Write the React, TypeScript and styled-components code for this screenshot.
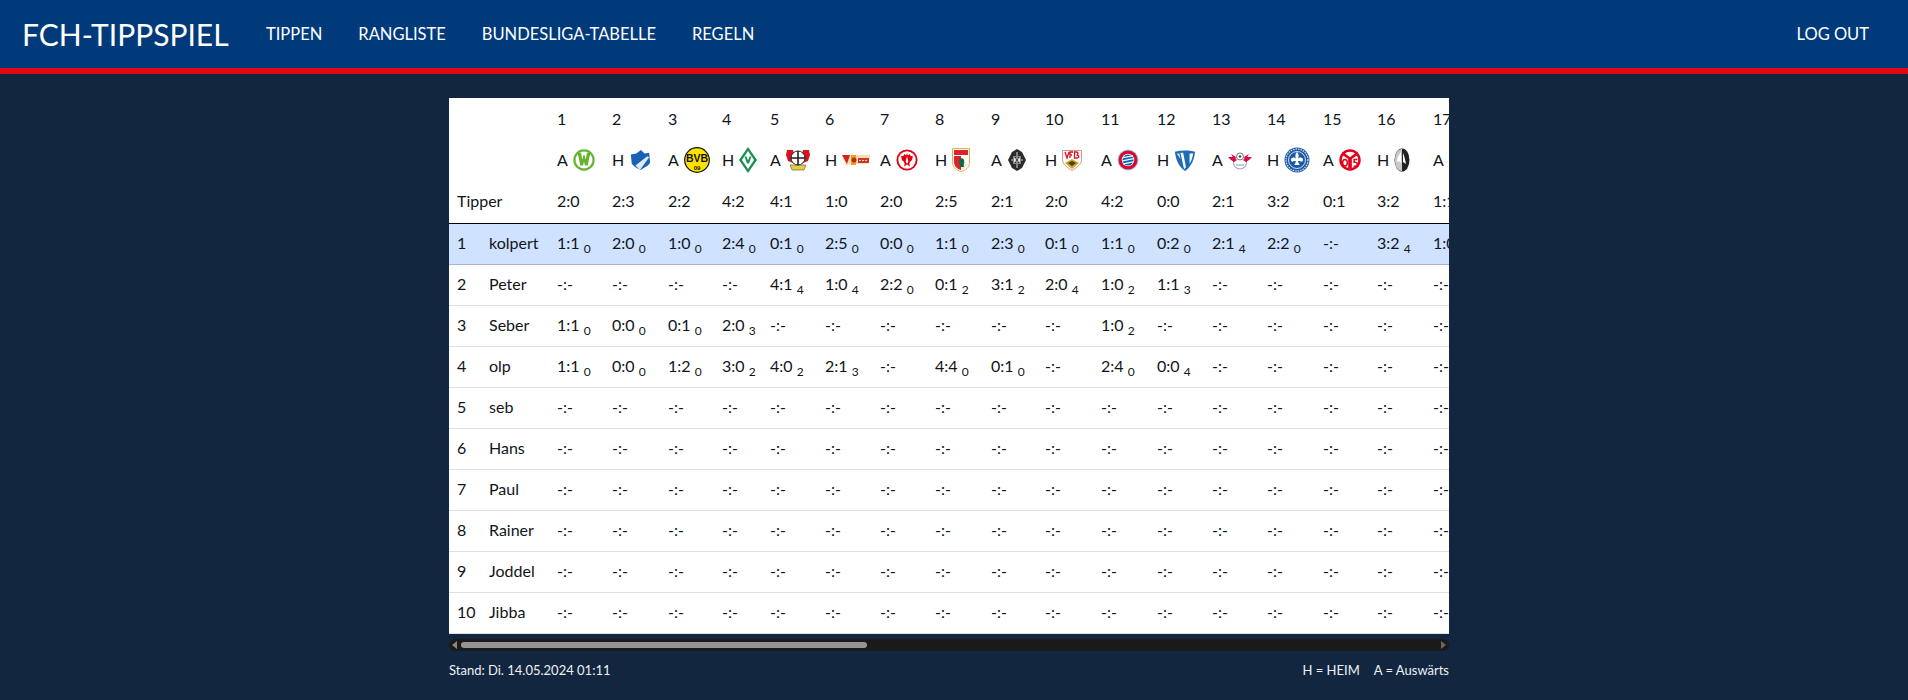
import React from "react";
import styled, { createGlobalStyle } from "styled-components";

const GlobalStyle = createGlobalStyle`
  html, body {
    margin: 0;
    padding: 0;
    background: #12263f;
  }
  body {
    font-family: Lato, "Noto Sans", sans-serif;
    font-size: 16px;
    line-height: 24px;
    color: #111519;
  }
`;

const Navbar = styled.nav`
  display: flex;
  align-items: center;
  height: 68px;
  padding: 0 21px 0 22px;
  background: #003a7a;
  border-bottom: 6px solid #e30613;
`;

const Brand = styled.a`
  width: 206px;
  margin-right: 20px;
  font-size: 30px;
  font-weight: 400;
  white-space: nowrap;
  color: #fff;
`;

const NavLink = styled.a<{ $right?: boolean }>`
  padding: 0 18px;
  margin-left: ${(p) => (p.$right ? "auto" : "0")};
  font-size: 16.5px;
  color: #fff;
`;

const Main = styled.main`
  width: 1000px;
  margin: 24px 0 0 449px;
`;

const Scroller = styled.div`
  overflow: hidden;
`;

const Table = styled.table`
  width: 1024px;
  table-layout: fixed;
  border-collapse: collapse;
  background: #fff;
`;

const Col = styled.col<{ $w: number }>`
  width: ${(p) => p.$w}px;
`;

const HeadCell = styled.th<{ $h: number; $line?: boolean }>`
  height: ${(p) => p.$h}px;
  padding: 0 0 ${(p) => (p.$line ? "2px" : "0")} 8px;
  font-weight: 400;
  text-align: left;
  white-space: nowrap;
  border-bottom: ${(p) => (p.$line ? "1px solid #000" : "none")};
`;

const Venue = styled.span`
  display: flex;
  align-items: center;
  gap: 5px;
`;

const Row = styled.tr<{ $me?: boolean }>`
  background: ${(p) => (p.$me ? "#cfe2ff" : "#fff")};
`;

const Cell = styled.td<{ $me?: boolean }>`
  height: 38px;
  padding: 0 0 2px 8px;
  white-space: nowrap;
  border-bottom: 1px solid ${(p) => (p.$me ? "#a6b5cc" : "#dee2e6")};
`;

const Points = styled.sub`
  font-size: 12px;
  line-height: 0;
  vertical-align: -4px;
`;

const ScrollTrack = styled.div`
  display: flex;
  align-items: center;
  height: 12px;
  margin-top: 5px;
  border-radius: 6px;
  background: #1a1a1a;
`;

const ScrollThumb = styled.div`
  width: 406px;
  height: 6px;
  margin-right: auto;
  border-radius: 3px;
  background: #959595;
`;

const Footer = styled.footer`
  display: flex;
  justify-content: space-between;
  margin-top: 7px;
  font-size: 13px;
  color: #eef1f5;
`;

const Legend = styled.span`
  display: flex;
  gap: 14px;
`;

const Wolfsburg = () => (
  <svg width="22" height="22" viewBox="0 0 24 24">
    <circle cx="12" cy="12" r="10.5" fill="#fff" stroke="#65b32e" strokeWidth="2.4" />
    <path d="M5 4h3.800l1.200 7.500L12 5.500l2 6L15.200 4H19l-3 14h-3l-1-4.500-1 4.500H8z" fill="#65b32e" />
  </svg>
);

const Hoffenheim = () => (
  <svg width="22" height="24" viewBox="0 0 24 24">
    <path d="M2 6l6-1 5-4 4 4 5-1 1 11c-2 4-7 5-10 8-3-2-7-3-10-7z" fill="#1961b5" />
    <path d="M7 18l13-10 2 1-10 14z" fill="#dfe9f6" />
  </svg>
);

const Dortmund = () => (
  <svg width="26" height="26" viewBox="0 0 26 26">
    <circle cx="13" cy="13" r="12.300" fill="#fde100" stroke="#111" strokeWidth="1.200" />
    <text x="13" y="15" fontSize="10.500" fontWeight="800" textAnchor="middle" fill="#111" fontFamily="Liberation Sans">BVB</text>
    <text x="13" y="22.500" fontSize="6" fontWeight="800" textAnchor="middle" fill="#111" fontFamily="Liberation Sans">09</text>
  </svg>
);

const Bremen = () => (
  <svg width="18" height="26" viewBox="0 0 18 26">
    <path d="M9 0l9 13-9 13-9-13z" fill="#1d9053" />
    <path d="M9 4l6 9-6 9-6-9z" fill="#fff" />
    <path d="M5.500 9.500h2l1.500 4 1.500-4h2l-2.500 7h-2z" fill="#1d9053" />
  </svg>
);

const Leverkusen = () => (
  <svg width="24" height="24" viewBox="0 0 24 24">
    <path d="M1 2l6 0 1 4-1 9-5-2-2-6z" fill="#d8121f" />
    <path d="M23 2l-6 0-1 4 1 9 5-2 2-6z" fill="#d8121f" />
    <path d="M4 17h16l-2 5H6z" fill="#e3cf3b" stroke="#555" strokeWidth=".6" />
    <circle cx="12" cy="10" r="7" fill="#fff" stroke="#222" strokeWidth="1" />
    <path d="M12 3v14M5 10h14" stroke="#222" strokeWidth="1.600" />
  </svg>
);

const Union = () => (
  <svg width="28" height="12" viewBox="0 0 28 12">
    <path d="M0 1h28v3l-2 6H8L4 12z" fill="#f6dcb5" />
    <path d="M0 1l5 9 3-9z" fill="#d4231a" />
    <path d="M9 1h5v10H9z" fill="#e8a21d" />
    <circle cx="12" cy="6" r="2.500" fill="#c1271c" />
    <path d="M16 4h11v5H16z" fill="#c93a2b" />
    <path d="M17 6.500h9" stroke="#f5d9a8" strokeWidth="1.200" strokeDasharray="2 1" />
  </svg>
);

const Frankfurt = () => (
  <svg width="22" height="22" viewBox="0 0 24 24">
    <circle cx="12" cy="12" r="11.500" fill="#e1000f" />
    <circle cx="12" cy="12" r="9.500" fill="#fff" />
    <path d="M12 4.500l1 2.500 2-1.500 1 2 2.500.5-1 4-2 2-1 2 1 3-3.500-2-3.500 2 1-3-1-2-2-2-1-4 2.500-.5 1-2 2 1.500z" fill="#e1000f" />
    <path d="M12 8l.800 3 .6 3-1.400 2-1.400-2 .6-3z" fill="#fff" />
  </svg>
);

const Augsburg = () => (
  <svg width="18" height="24" viewBox="0 0 18 24">
    <path d="M.500.500h17v14c0 5-4 8-8.500 9C5 22.500.500 19.500.500 14.500z" fill="#fff" stroke="#f0a83c" />
    <path d="M2 2h14v5H2z" fill="#d9232e" />
    <path d="M2 8h7v14c-4-1-7-4-7-8z" fill="#d9232e" />
    <path d="M9 8c2 2 2 4 0 7 2 2 3 2 7 1-1 3-4 5-7 6z" fill="#e9e9e9" />
    <path d="M7 13c0-3 4-4 5-1 1 3-1 5 0 7H8c1-3-1-3-1-6z" fill="#0c6b3f" />
  </svg>
);

const Gladbach = () => (
  <svg width="20" height="24" viewBox="0 0 20 24">
    <path d="M10 1l5 3 4 8-4 8-5 3-5-3-4-8 4-8z" fill="#2b2b2b" />
    <path d="M4 12h12M10 4v16" stroke="#bbb" strokeWidth="1.200" />
    <path d="M6 8h8v8H6z" fill="#888" />
    <path d="M7 10h6v4H7z" fill="#ddd" />
    <path d="M8 9l4 6M12 9l-4 6" stroke="#333" strokeWidth="1" />
  </svg>
);

const Stuttgart = () => (
  <svg width="20" height="21" viewBox="0 0 20 21">
    <path d="M.500.500h19v9c0 5-5 8-9.500 11C5.500 17.500.500 14.500.500 9.500z" fill="#fff" stroke="#e8888e" />
    <path d="M3 2l2 6 2-6M8 8V2h3M8 5h2M12.500 2v6h2c3 0 3-3 0-3 2 0 2-3 0-3z" fill="none" stroke="#d8121f" strokeWidth="1.300" />
    <path d="M3 13l7-4 7 4-7 6z" fill="#c9a41d" />
    <path d="M6 13l4-2 4 2-4 3z" fill="#4c4010" />
  </svg>
);

const Bayern = () => (
  <svg width="22" height="22" viewBox="0 0 24 24">
    <circle cx="12" cy="12" r="11.500" fill="#a9c6e8" />
    <circle cx="12" cy="12" r="10.300" fill="#dc052d" />
    <circle cx="12" cy="12" r="6.800" fill="#fff" />
    <circle cx="12" cy="12" r="6" fill="#0066b2" />
    <path d="M6.500 9.500l11-2M6 13l12-2.500M7 16.300l10.500-2.300" stroke="#fff" strokeWidth="1.400" />
  </svg>
);

const Bochum = () => (
  <svg width="22" height="22" viewBox="0 0 24 24">
    <path d="M1 3c7-2 15-2 22 0-1 9-4 16-11 21C5 19 2 12 1 3z" fill="#1c6cb5" />
    <path d="M17 5h4c-1 5-2 8-4 11z" fill="#fff" />
    <path d="M7 4l3 0 3 16-2 2z" fill="#fff" />
    <path d="M3 5h3l1 6z" fill="#cfe0f2" />
  </svg>
);

const Leipzig = () => (
  <svg width="24" height="20" viewBox="0 0 24 20">
    <ellipse cx="12" cy="12.500" rx="6.500" ry="6.500" fill="#fff" stroke="#9ea7c2" strokeWidth="1.200" />
    <path d="M0 7l6 0 3 3-3 2-3-2zM24 7l-6 0-3 3 3 2 3-2z" fill="#dd0741" />
    <path d="M3 4l5 3-2 2zM21 4l-5 3 2 2z" fill="#dd0741" />
    <circle cx="12" cy="6.500" r="3.500" fill="#fff" stroke="#555" strokeWidth=".8" />
    <circle cx="12" cy="6.500" r="1.200" fill="#444" />
    <path d="M8 15h8" stroke="#9ea7c2" strokeWidth="1.200" />
  </svg>
);

const Darmstadt = () => (
  <svg width="26" height="26" viewBox="0 0 26 26">
    <circle cx="13" cy="13" r="12.500" fill="#1c5aa5" />
    <circle cx="13" cy="13" r="11" fill="none" stroke="#cfdcee" strokeWidth="1.300" strokeDasharray="1.500 1" />
    <circle cx="13" cy="13" r="8.500" fill="#1c5aa5" stroke="#fff" strokeWidth=".8" />
    <path d="M13 5c2 2 2 4 1 7 1-2 5-2 5 1 0 2-2 2-3 1l-2 0 1 3 1 1h-6l1-1 1-3-2 0c-1 1-3 1-3-1 0-3 4-3 5-1-1-3-1-5 1-7z" fill="#fff" />
  </svg>
);

const Mainz = () => (
  <svg width="22" height="22" viewBox="0 0 24 24">
    <circle cx="12" cy="12" r="11.700" fill="#e3001b" />
    <circle cx="12" cy="12" r="9" fill="#fff" />
    <path d="M4 3l8 6 8-6 1 3-7 5v10h-4V11L3 6z" fill="#e3001b" />
    <ellipse cx="6.500" cy="15" rx="2.500" ry="3.600" fill="none" stroke="#e3001b" strokeWidth="1.600" />
    <path d="M20 11.500h-3.500v3c2-.5 3.500.5 3.500 2s-2 3-4 2" fill="none" stroke="#e3001b" strokeWidth="1.600" />
  </svg>
);

const Freiburg = () => (
  <svg width="16" height="24" viewBox="0 0 16 24">
    <ellipse cx="8" cy="12" rx="7.500" ry="11.500" fill="#222" />
    <path d="M8 1C3 1 1 6 1 12s2 11 7 11z" fill="#c9c9c9" />
    <path d="M7 4C4 8 3 10 3 14c2-1 3 0 4 1z" fill="#fff" />
    <path d="M9 5c1 2 2 6 3 11l-3-2z" fill="#fff" />
  </svg>
);

const Heidenheim = () => (
  <svg width="22" height="22" viewBox="0 0 24 24">
    <circle cx="12" cy="12" r="11" fill="#fff" stroke="#e2001a" strokeWidth="2" />
    <path d="M5 12h14" stroke="#e2001a" strokeWidth="3" />
  </svg>
);

const rounds: [number, string, React.ComponentType, string][] = [
  [55, "A", Wolfsburg, "2:0"],
  [56, "H", Hoffenheim, "2:3"],
  [54, "A", Dortmund, "2:2"],
  [48, "H", Bremen, "4:2"],
  [55, "A", Leverkusen, "4:1"],
  [55, "H", Union, "1:0"],
  [55, "A", Frankfurt, "2:0"],
  [56, "H", Augsburg, "2:5"],
  [54, "A", Gladbach, "2:1"],
  [56, "H", Stuttgart, "2:0"],
  [56, "A", Bayern, "4:2"],
  [55, "H", Bochum, "0:0"],
  [55, "A", Leipzig, "2:1"],
  [56, "H", Darmstadt, "3:2"],
  [54, "A", Mainz, "0:1"],
  [56, "H", Freiburg, "3:2"],
  [56, "A", Heidenheim, "1:1"],
];

const tippers: [string, string][] = [
  ["kolpert", "1:1/0 2:0/0 1:0/0 2:4/0 0:1/0 2:5/0 0:0/0 1:1/0 2:3/0 0:1/0 1:1/0 0:2/0 2:1/4 2:2/0 - 3:2/4 1:0/0"],
  ["Peter", "- - - - 4:1/4 1:0/4 2:2/0 0:1/2 3:1/2 2:0/4 1:0/2 1:1/3"],
  ["Seber", "1:1/0 0:0/0 0:1/0 2:0/3 - - - - - - 1:0/2"],
  ["olp", "1:1/0 0:0/0 1:2/0 3:0/2 4:0/2 2:1/3 - 4:4/0 0:1/0 - 2:4/0 0:0/4"],
  ["seb", ""],
  ["Hans", ""],
  ["Paul", ""],
  ["Rainer", ""],
  ["Joddel", ""],
  ["Jibba", ""],
];

const Tip = ({ value }: { value?: string }) => {
  if (!value || value === "-") return <>-:-</>;
  const [score, points] = value.split("/");
  return (
    <>
      {score} <Points>{points}</Points>
    </>
  );
};

export default function App() {
  return (
    <>
      <GlobalStyle />
      <Navbar>
        <Brand>FCH-TIPPSPIEL</Brand>
        <NavLink>TIPPEN</NavLink>
        <NavLink>RANGLISTE</NavLink>
        <NavLink>BUNDESLIGA-TABELLE</NavLink>
        <NavLink>REGELN</NavLink>
        <NavLink $right>LOG OUT</NavLink>
      </Navbar>
      <Main>
        <Scroller>
          <Table>
            <colgroup>
              <Col $w={32} />
              <Col $w={68} />
              {rounds.map((r, i) => (
                <Col key={i} $w={r[0]} />
              ))}
            </colgroup>
            <thead>
              <tr>
                <HeadCell $h={41} colSpan={2} />
                {rounds.map((_, i) => (
                  <HeadCell key={i} $h={39}>{i + 1}</HeadCell>
                ))}
              </tr>
              <tr>
                <HeadCell $h={42} colSpan={2} />
                {rounds.map(([, venue, Crest], i) => (
                  <HeadCell key={i} $h={42}>
                    <Venue>
                      {venue}
                      <Crest />
                    </Venue>
                  </HeadCell>
                ))}
              </tr>
              <tr>
                <HeadCell $h={40} $line colSpan={2}>Tipper</HeadCell>
                {rounds.map((r, i) => (
                  <HeadCell key={i} $h={40} $line>{r[3]}</HeadCell>
                ))}
              </tr>
            </thead>
            <tbody>
              {tippers.map(([name, tips], n) => {
                const list = tips.split(" ");
                return (
                  <Row key={name} $me={n === 0}>
                    <Cell $me={n === 0}>{n + 1}</Cell>
                    <Cell $me={n === 0}>{name}</Cell>
                    {rounds.map((_, i) => (
                      <Cell key={i} $me={n === 0}>
                        <Tip value={list[i]} />
                      </Cell>
                    ))}
                  </Row>
                );
              })}
            </tbody>
          </Table>
        </Scroller>
        <ScrollTrack>
          <svg width="12" height="12" viewBox="0 0 12 12">
            <path d="M3 6l5-4v8z" fill="#888" />
          </svg>
          <ScrollThumb />
          <svg width="12" height="12" viewBox="0 0 12 12">
            <path d="M9 6L4 2v8z" fill="#666" />
          </svg>
        </ScrollTrack>
        <Footer>
          <span>Stand: Di. 14.05.2024 01:11</span>
          <Legend>
            <span>H = HEIM</span>
            <span>A = Auswärts</span>
          </Legend>
        </Footer>
      </Main>
    </>
  );
}
